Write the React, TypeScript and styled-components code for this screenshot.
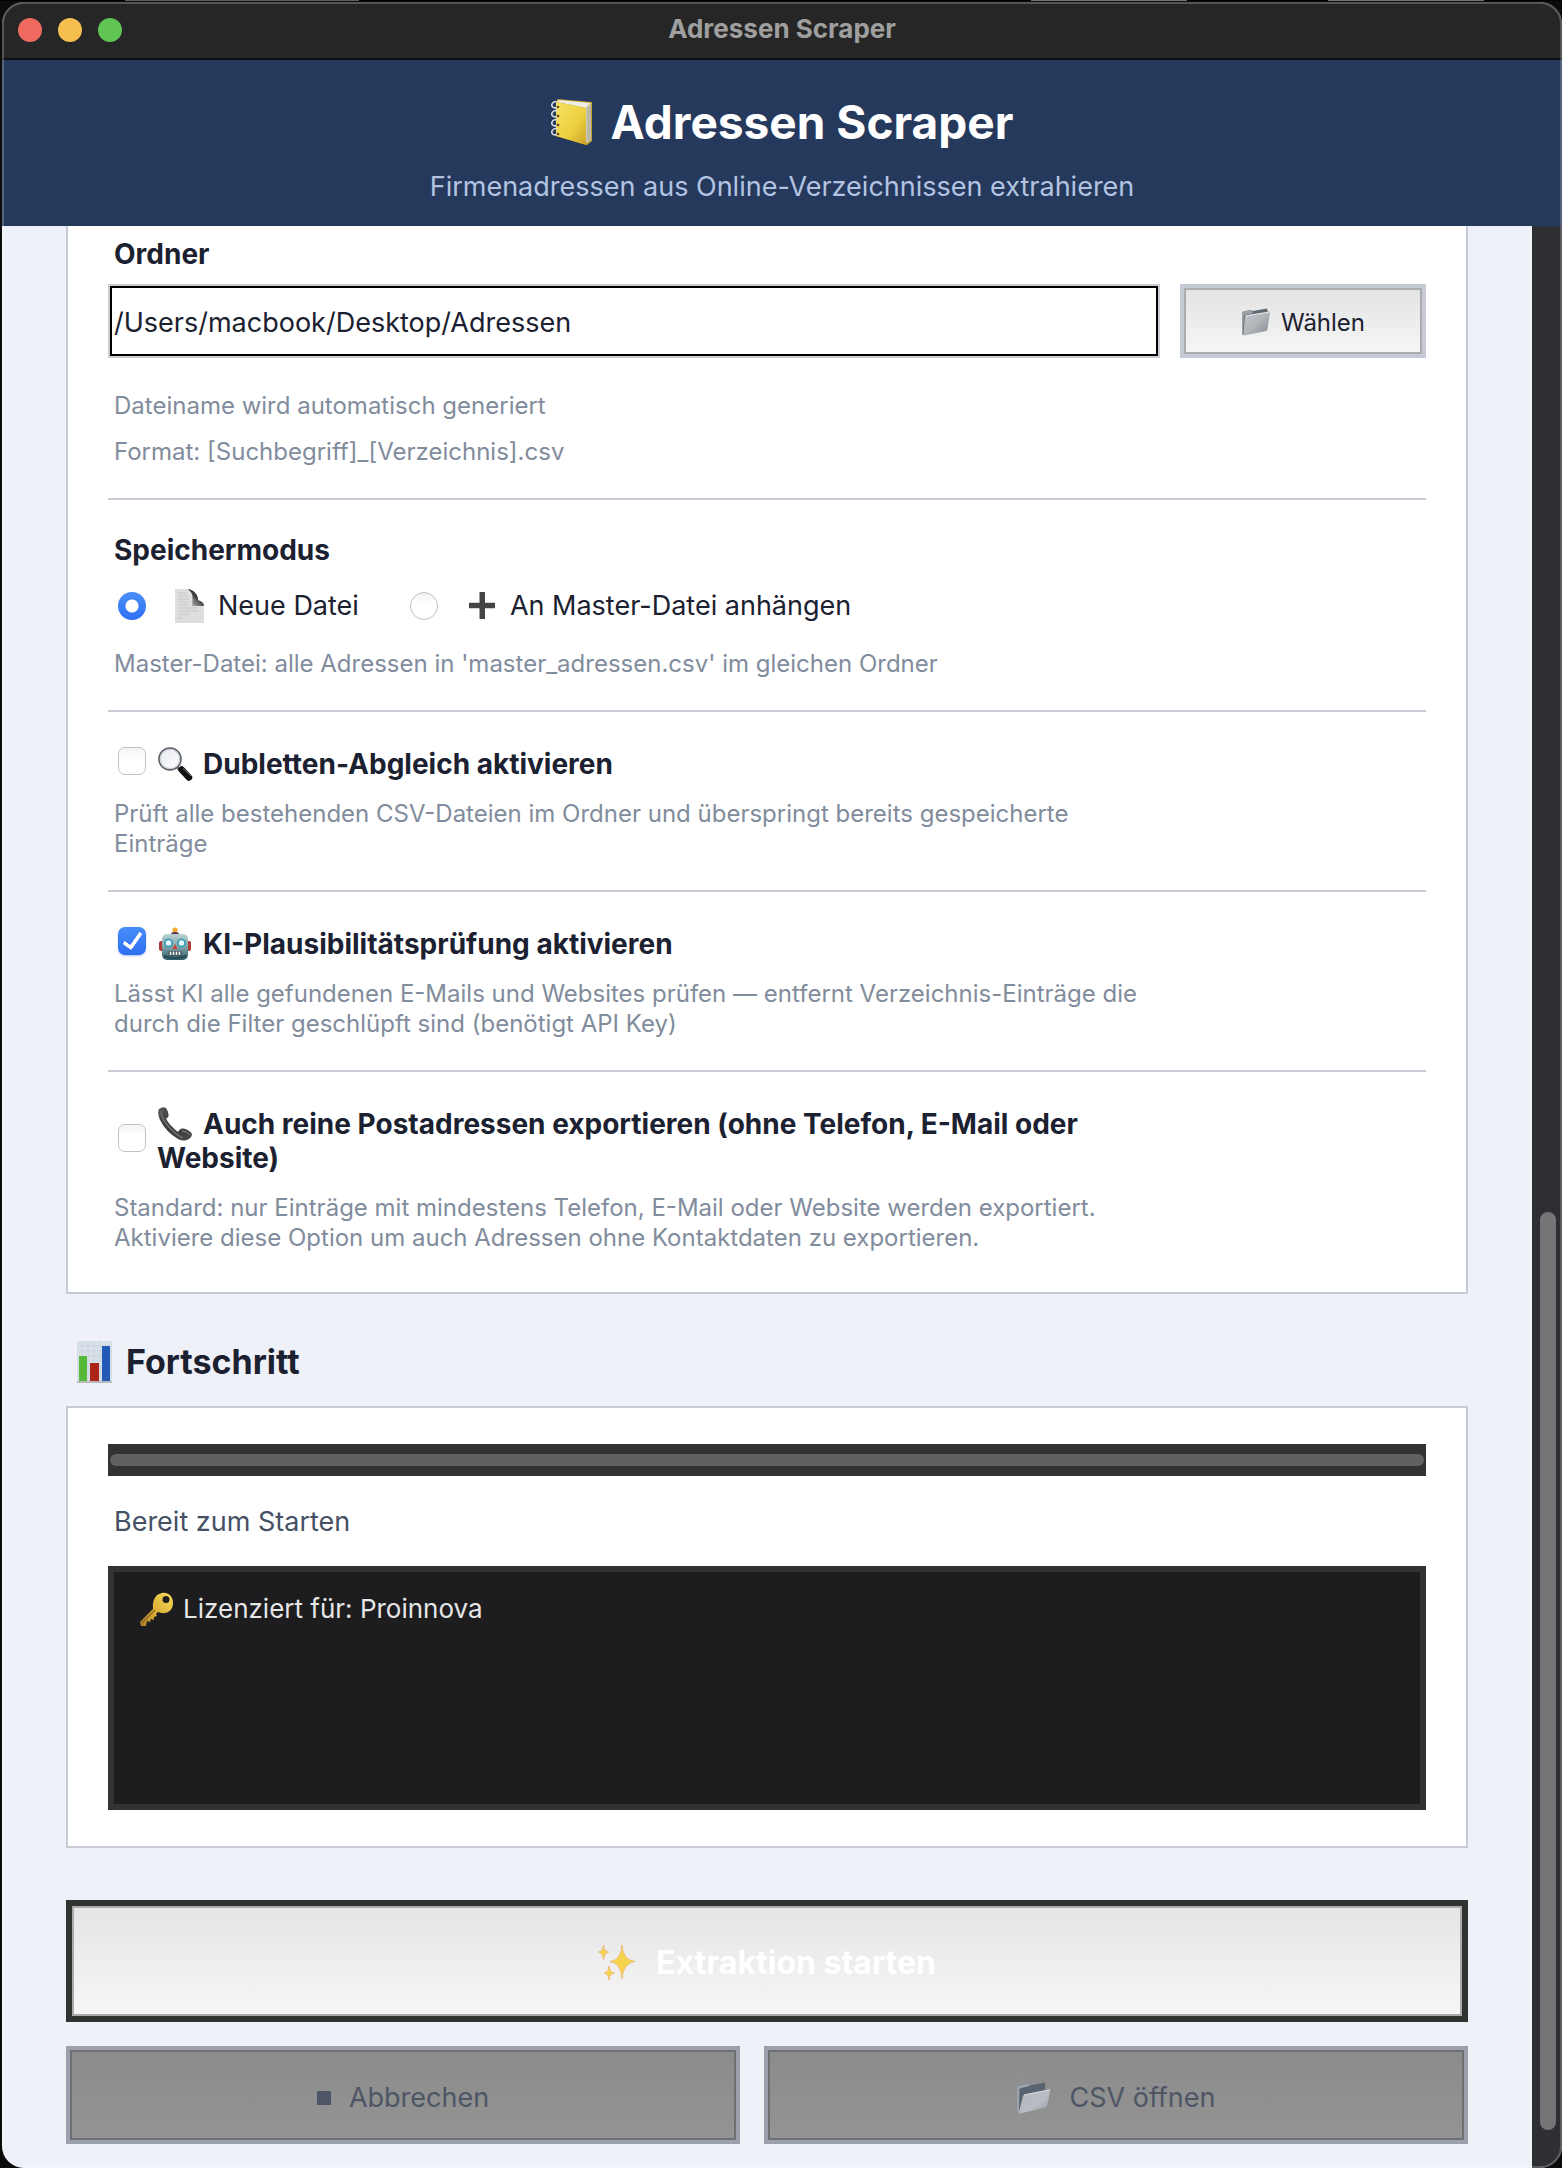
import React, { useState } from "react";
import styled, { createGlobalStyle, css } from "styled-components";

const GlobalStyle = createGlobalStyle`
  *, *::before, *::after { box-sizing: border-box; }
  body {
    margin: 0;
    background: #0c0c0c;
    font-family: Inter, "Liberation Sans", sans-serif;
    color: #1b2130;
  }
  h1, h2, h3, p { margin: 0; }
  button, input { font-family: inherit; }
`;

const Desktop = styled.div`
  min-height: 100vh;
  padding: 2px 0 0 2px;
  background: linear-gradient(
      90deg,
      #000 8%, #59625f 8% 23%, #000 23% 66%,
      #6c7875 66% 76%, #000 76% 85%, #6c7875 85% 95%, #000 95%
    ) top / 100% 1px no-repeat, #0c0c0c;
`;

const Window = styled.main`
  position: relative;
  display: flex;
  flex-direction: column;
  min-height: calc(100vh - 2px);
  border-radius: 22px;
  overflow: hidden;
  background: #eef1f7;

  &::after {
    content: "";
    position: absolute;
    inset: 0;
    border: 2px solid rgba(255, 255, 255, 0.22);
    border-radius: 22px;
    pointer-events: none;
  }
`;

const TitleBar = styled.div`
  display: grid;
  grid-template-columns: 1fr auto 1fr;
  align-items: center;
  height: 58px;
  padding: 0 16px;
  background: #262626;
  border-bottom: 2px solid #0b0d10;
`;

const Lights = styled.div`
  display: flex;
  gap: 16px;
`;

const Light = styled.span<{ $color: string }>`
  width: 24px;
  height: 24px;
  border-radius: 50%;
  background: ${(p) => p.$color};
`;

const WindowTitle = styled.span`
  padding-bottom: 2px;
  font-size: 26px;
  line-height: 32px;
  font-weight: 700;
  color: #9f9f9f;
`;

const Header = styled.header`
  display: flex;
  flex-direction: column;
  align-items: center;
  gap: 18px;
  padding: 32px 24px 22px;
  background: #25395c;
`;

const AppTitle = styled.h1`
  display: flex;
  align-items: center;
  gap: 18px;
  font-size: 46px;
  line-height: 60px;
  font-weight: 700;
  color: #fff;
`;

const Subtitle = styled.p`
  font-size: 27px;
  line-height: 34px;
  color: #b3c4e2;
`;

const Body = styled.div`
  display: flex;
  flex: 1;
`;

const Content = styled.div`
  flex: 1;
  min-width: 0;
  padding: 0 64px 24px;
`;

const Track = styled.div`
  display: flex;
  flex-direction: column;
  width: 30px;
  padding: 0 6px 0 8px;
  background: #2e2f32;
`;

const Thumb = styled.div`
  flex: 918;
  border-radius: 8px;
  background: #757577;
`;

const TrackSpace = styled.div<{ $share: number }>`
  flex: ${(p) => p.$share};
`;

const Card = styled.section<{ $cut?: boolean }>`
  padding: 36px 40px;
  background: #fff;
  border: 2px solid #c6cbd5;
  ${(p) =>
    p.$cut &&
    css`
      padding: 0 40px 8px;
      border-top: 0;
    `}
`;

const Group = styled.div<{ $top: number }>`
  padding: ${(p) => p.$top}px 0 31px;
  & + & {
    border-top: 2px solid #c6cbd5;
  }
`;

const FieldTitle = styled.h3`
  padding-left: 6px;
  font-size: 28px;
  line-height: 34px;
  font-weight: 700;
`;

const FieldLabel = styled.label`
  display: block;
  padding-left: 6px;
  font-size: 28px;
  line-height: 34px;
  font-weight: 700;
`;

const PathRow = styled.div`
  display: flex;
  gap: 20px;
  margin: 13px 0 33px;
`;

const PathInput = styled.input`
  flex: 1;
  min-width: 0;
  height: 74px;
  padding: 2px 4px 0;
  border: 2px solid #c9ccd2;
  border-radius: 0;
  outline: 0;
  background: #fff;
  box-shadow: inset 0 0 0 2px #000;
  font-size: 27px;
  color: #1b2130;
`;

const buttonKinds = {
  plain: css`
    width: 246px;
    height: 74px;
    padding-top: 2px;
    gap: 10px;
    border: 4px solid #c5cad5;
    box-shadow: inset 0 0 0 2px #aaacaf;
    background: linear-gradient(#e2e2e2, #f7f7f7);
    font-size: 24px;
    color: #1b2130;
  `,
  primary: css`
    width: 100%;
    height: 122px;
    padding-top: 2px;
    gap: 20px;
    border: 6px solid #313232;
    box-shadow: inset 0 0 0 2px #aaaaaa;
    background: linear-gradient(#e4e4e4, #f7f7f7);
    font-size: 32px;
    font-weight: 700;
    color: #fff;
  `,
  disabled: css`
    height: 98px;
    padding-top: 5px;
    gap: 18px;
    border: 4px solid #9ca0ac;
    box-shadow: inset 0 0 0 2px #6d6f75;
    background: linear-gradient(#8b8b8b, #949494);
    font-size: 27px;
    color: #4e5565;
  `,
};

const Button = styled.button<{ $kind: keyof typeof buttonKinds }>`
  display: flex;
  align-items: center;
  justify-content: center;
  padding: 0;
  border-radius: 0;
  ${(p) => buttonKinds[p.$kind]}
  background-origin: border-box;
`;

const Hint = styled.p<{ $gap?: number }>`
  max-width: 1046px;
  margin-top: ${(p) => p.$gap ?? 0}px;
  padding-left: 6px;
  font-size: 24px;
  line-height: 30px;
  color: #818c9c;
`;

const RadioRow = styled.div`
  display: flex;
  gap: 51px;
  margin-top: 22px;
  padding-left: 10px;
`;

const RadioLabel = styled.label`
  display: flex;
  align-items: center;
  font-size: 27px;
  line-height: 34px;

  svg {
    margin: 0 8px 0 28px;
  }
`;

const Radio = styled.input`
  appearance: none;
  width: 28px;
  height: 28px;
  margin: 0;
  border: 1px solid #c2c2c2;
  border-radius: 50%;
  background: linear-gradient(#f2f2f2, #fff 40%);

  &:checked {
    border: 0;
    background: radial-gradient(circle, #fff 6px, transparent 7px),
      linear-gradient(#4a90f8, #2f6ff0);
  }
`;

const CheckRow = styled.div`
  display: flex;
  align-items: center;
  gap: 11px;
  padding-left: 10px;
`;

const CheckLabel = styled.label`
  max-width: 1000px;
  font-size: 28px;
  line-height: 34px;
  font-weight: 700;

  svg {
    margin-right: 10px;
    vertical-align: -7px;
  }
`;

const Checkbox = styled.input`
  appearance: none;
  flex: none;
  display: grid;
  place-items: center;
  width: 28px;
  height: 28px;
  margin: 0 0 6px;
  border: 1px solid #c2c2c2;
  border-radius: 7px;
  background: linear-gradient(#f4f4f4, #fff 40%);

  &:checked {
    border: 0;
    background: linear-gradient(#478df8, #2e70f2);
    box-shadow: 0 1px 2px rgba(47, 111, 240, 0.4);
  }
  &:checked::after {
    content: "";
    width: 11px;
    height: 20px;
    margin-bottom: 4px;
    border: solid #fff;
    border-width: 0 4px 4px 0;
    border-radius: 2px;
    transform: rotate(35deg);
  }
`;

const SectionTitle = styled.h2`
  display: flex;
  align-items: center;
  gap: 14px;
  margin: 47px 0 23px;
  padding-left: 11px;
  font-size: 34px;
  line-height: 42px;
  font-weight: 700;
`;

const ProgressFrame = styled.div`
  display: flex;
  padding: 10px 2px;
  background: #323232;
`;

const Progress = styled.progress`
  appearance: none;
  width: 100%;
  height: 12px;
  border: 0;

  &::-webkit-progress-bar {
    border-radius: 6px;
    background: #616161;
  }
  &::-webkit-progress-value {
    border-radius: 6px;
    background: #3d7ff5;
  }
`;

const Status = styled.p`
  margin: 29px 0 27px;
  padding-left: 6px;
  font-size: 27px;
  line-height: 34px;
  color: #455065;
`;

const Log = styled.div`
  min-height: 244px;
  padding: 20px 25px;
  border: 6px solid #323232;
  background: #1d1d1f;
`;

const LogLine = styled.p`
  display: flex;
  align-items: center;
  gap: 9px;
  font-size: 26px;
  line-height: 34px;
  color: #e6e6e6;
`;

const Actions = styled.div`
  display: grid;
  grid-template-columns: 674fr 704fr;
  gap: 24px;
  margin-top: 52px;
`;

const FullRow = styled.div`
  grid-column: 1 / -1;
`;

const StopSquare = styled.span`
  width: 14px;
  height: 14px;
  background: currentColor;
`;

const NotebookIcon = () => (
  <svg width="42" height="48" viewBox="0 0 42 48" aria-hidden="true">
    <defs>
      <linearGradient id="nb" x1="0" y1="0" x2="1" y2="1">
        <stop offset="0" stopColor="#f7e163" />
        <stop offset="0.6" stopColor="#ecd03f" />
        <stop offset="1" stopColor="#c9a227" />
      </linearGradient>
    </defs>
    <path d="M6 1 L41 4 L41 43 L36 47 L5 38 Z" fill="#c6a32f" />
    <path d="M8 2 L40 5 L35 10 L6 4 Z" fill="#efeee6" />
    <path d="M35 10 L40 6 L40 42 L35 45 Z" fill="#cfccba" />
    <path d="M37 9 V43 M39 8 V42" stroke="#969381" strokeWidth="0.7" />
    <path d="M5 4 L35 10 L35 47 L5 38 Z" fill="url(#nb)" />
    <g fill="none" stroke="#d9dce0" strokeWidth="1.6">
      <path d="M7 9 C3 11 0 9 1 6 C2 4 4 3 6 4" />
      <path d="M7 18 C3 20 0 18 1 15 C2 13 4 12 6 13" />
      <path d="M7 27 C3 29 0 27 1 24 C2 22 4 21 6 22" />
      <path d="M7 36 C3 38 0 36 1 33 C2 31 4 30 6 31" />
    </g>
    <g fill="#5c4a14">
      <circle cx="7" cy="9" r="1.3" /><circle cx="7" cy="18" r="1.3" />
      <circle cx="7" cy="27" r="1.3" /><circle cx="7" cy="36" r="1.3" />
    </g>
  </svg>
);

const FolderIcon = () => (
  <svg width="30" height="28" viewBox="0 0 30 28" aria-hidden="true">
    <defs>
      <linearGradient id="fo" x1="0" y1="0" x2="1" y2="1">
        <stop offset="0" stopColor="#c3c7cb" />
        <stop offset="0.5" stopColor="#b1b5ba" />
        <stop offset="1" stopColor="#84898f" />
      </linearGradient>
    </defs>
    <path d="M1 4 L9 2 L12 3 L26 0.5 L27 5 L4 26 L1 27 Z" fill="#5f676f" />
    <path d="M1 4 L9 2 L12 4 L12 5 L3 7 L2 27 L1 26 Z" fill="#9ba3aa" />
    <path d="M4 8 Q4 7 5.500 7 L28 3.500 Q29.500 3.500 29 5 L26.500 21 Q26.300 22.500 25 23 L3.500 27.500 Q2.300 27.500 2.500 26 Z" fill="url(#fo)" />
    <path d="M4.500 8 L28.500 4.200" stroke="#dfe3e6" strokeWidth="1" />
  </svg>
);

const OpenFolderIcon = () => (
  <svg width="35" height="32" viewBox="0 0 35 32" aria-hidden="true">
    <defs>
      <linearGradient id="of" x1="0" y1="0" x2="1" y2="1">
        <stop offset="0" stopColor="#b5b9bf" />
        <stop offset="0.6" stopColor="#b9bdc3" />
        <stop offset="1" stopColor="#92979e" />
      </linearGradient>
    </defs>
    <path d="M1 4 L13 1.500 L14 3.500 L29 0.500 L29 9 L3 31 L1 29 Z" fill="#59636f" />
    <path d="M1 4 L13 1.500 L14 4 L3.500 6.500 L3 31 L1 29 Z" fill="#9aa3ad" />
    <path d="M7 14 Q7.500 12.500 9 12.200 L33 7.500 Q34.600 7.300 34 9 L31 24 Q30.700 25.300 29.500 25.600 L4 31.500 Q2.500 31.700 3 30 Z" fill="url(#of)" />
    <path d="M8 13 L34 7.800" stroke="#d3d7dc" strokeWidth="1" />
  </svg>
);

const PageIcon = () => (
  <svg width="36" height="34" viewBox="0 0 36 34" aria-hidden="true">
    <defs>
      <linearGradient id="pg" x1="0" y1="1" x2="1" y2="0">
        <stop offset="0" stopColor="#d8d8d8" />
        <stop offset="0.45" stopColor="#5a5a5a" />
        <stop offset="1" stopColor="#222" />
      </linearGradient>
    </defs>
    <path d="M1 0 H15 L30 16 V34 H1 Z" fill="#dedede" />
    <path d="M14 0 C19 3 19 8 18 17 L30 17 C30 12 25 12 24 11 C24 6 20 1 14 0 Z" fill="url(#pg)" />
    <path d="M14 0 C19 1 24 5 24 11 C20 9 19 4 14 0 Z" fill="#3c3c3c" />
    <path d="M4 4 h8 M4 7 h10 M4 10 h11 M4 13 h11 M4 16 h10 M4 19 h19 M4 22 h21 M4 25 h12 M4 29 h5" stroke="#c3c3c3" strokeWidth="0.9" />
  </svg>
);

const PlusIcon = () => (
  <svg width="36" height="34" viewBox="0 0 36 34" aria-hidden="true">
    <path d="M13.500 3 h5.500 v10.700 h10 v5.600 h-10 V30 h-5.500 V19.300 H3 v-5.600 h10.500 Z" fill="#444" />
  </svg>
);

const MagnifierIcon = () => (
  <svg width="36" height="34" viewBox="0 0 36 34" aria-hidden="true">
    <defs>
      <linearGradient id="mg" x1="0" y1="0" x2="1" y2="1">
        <stop offset="0" stopColor="#e6e9ee" />
        <stop offset="1" stopColor="#fff" />
      </linearGradient>
    </defs>
    <path d="M20 20 L24 24" stroke="#777" strokeWidth="3" />
    <path d="M24.500 22.500 L32 30.500" stroke="#111" strokeWidth="6.500" strokeLinecap="round" />
    <path d="M26 21.500 L34 29" stroke="#6f6f6f" strokeWidth="1" />
    <circle cx="13" cy="12" r="11" fill="url(#mg)" stroke="#5b5f66" strokeWidth="1.600" />
    <circle cx="13" cy="12" r="9.600" fill="none" stroke="#c9cdd3" strokeWidth="1" />
  </svg>
);

const RobotIcon = () => (
  <svg width="36" height="34" viewBox="0 0 36 34" aria-hidden="true">
    <defs>
      <linearGradient id="rb" x1="0" y1="0" x2="0" y2="1">
        <stop offset="0" stopColor="#b9d2d4" />
        <stop offset="0.5" stopColor="#7fa3a8" />
        <stop offset="1" stopColor="#2d5c66" />
      </linearGradient>
    </defs>
    <circle cx="18" cy="3" r="2.600" fill="#f0a92e" />
    <path d="M14 7 Q14 5 18 5 Q22 5 22 7 Z" fill="#55314e" />
    <rect x="2" y="14" width="5" height="10" rx="2" fill="#b23a35" />
    <rect x="29" y="14" width="5" height="10" rx="2" fill="#b23a35" />
    <rect x="5" y="7" width="26" height="26" rx="5" fill="url(#rb)" />
    <path d="M7 29 Q18 33 29 29" fill="none" stroke="#244c55" strokeWidth="2" />
    <g fill="#eafcff" stroke="#3a9db5" strokeWidth="1.800">
      <circle cx="11.500" cy="16" r="3.600" /><circle cx="24.500" cy="16" r="3.600" />
    </g>
    <path d="M18 17 L20.500 22 H15.500 Z" fill="#c8403a" />
    <rect x="11.500" y="24" width="13" height="4.500" rx="1" fill="#2c3d42" />
    <path d="M13.500 24.500 v3.500 M16.500 24.500 v3.500 M19.500 24.500 v3.500 M22.500 24.500 v3.500" stroke="#f3f3f3" strokeWidth="1.800" />
  </svg>
);

const PhoneIcon = () => (
  <svg width="36" height="34" viewBox="0 0 36 34" aria-hidden="true">
    <defs>
      <linearGradient id="ph" x1="0" y1="0" x2="1" y2="1">
        <stop offset="0" stopColor="#565656" />
        <stop offset="0.5" stopColor="#3a3a3a" />
        <stop offset="1" stopColor="#4a4a4a" />
      </linearGradient>
    </defs>
    <path d="M2 2 Q6 -1 9 1 Q12 5 11.500 9 Q11 11 9 11.500 Q12 18 21 25 Q23 21 26 21.500 Q31 22 34.500 26 Q36 29 32 32 Q27 35 21 32 Q9 25 3 13 Q0 6 2 2 Z" fill="url(#ph)" />
    <path d="M4 4 Q4 11 12 20 Q19 28 26 31" fill="none" stroke="#777" strokeWidth="1.200" />
    <path d="M25 24 Q30 24 33 28" fill="none" stroke="#858585" strokeWidth="1" />
  </svg>
);

const ChartIcon = () => (
  <svg width="35" height="42" viewBox="0 0 35 42" aria-hidden="true">
    <rect width="35" height="42" fill="#d9e1e8" />
    <path d="M0 5 H35 M0 10 H35 M0 15 H35 M0 20 H35 M0 25 H35 M0 30 H35 M0 35 H35 M5 0 V42 M11 0 V42 M17 0 V42 M23 0 V42 M29 0 V42" stroke="#c5d2dd" strokeWidth="0.700" />
    <rect x="2" y="15" width="8" height="26" fill="#56b83b" />
    <rect x="13" y="22" width="9" height="19" fill="#ad2418" />
    <rect x="25" y="5" width="8" height="36" fill="#2559b8" />
    <rect y="40" width="35" height="2" fill="#b7b9bd" />
  </svg>
);

const KeyIcon = () => (
  <svg width="35" height="34" viewBox="0 0 35 34" aria-hidden="true">
    <defs>
      <linearGradient id="ky" x1="1" y1="0" x2="0" y2="1">
        <stop offset="0" stopColor="#f6dc55" />
        <stop offset="0.6" stopColor="#d9ab35" />
        <stop offset="1" stopColor="#a97b25" />
      </linearGradient>
    </defs>
    <path
      fillRule="evenodd"
      d="M23 1 C29 0 34 4 34 11 C34 18 29 22 22 21 L19 20 L17 22 L18 24 L15 25 L15 28 L12 27 L11 30 L8 29 L7 34 L2 34 L1 30 L14 17 C13 9 16 2 23 1 Z M27 4 A3.500 3.500 0 1 0 27 11 A3.500 3.500 0 1 0 27 4 Z"
      fill="url(#ky)"
    />
    <path d="M3 31 L16 18" stroke="#8a631c" strokeWidth="1.200" />
  </svg>
);

const SparklesIcon = () => (
  <svg width="38" height="36" viewBox="0 0 38 36" aria-hidden="true">
    <g fill="#f6d34f" stroke="#eeb56a" strokeWidth="0.800">
      <path d="M24 1 Q25 16 37 17.500 Q25 19 24 35 Q23 19 12 17.500 Q23 16 24 1 Z" />
      <path d="M5.500 1 Q6 7.500 10.500 8 Q6 9 5.500 16 Q5 9 0.500 8 Q5 7.500 5.500 1 Z" />
      <path d="M11 22 Q11.500 28.500 16.500 29 Q11.500 29.500 11 36 Q10.500 29.500 6 29 Q10.500 28.500 11 22 Z" />
    </g>
  </svg>
);

type OptionProps = {
  id: string;
  icon: React.ReactNode;
  label: string;
  hint: string;
  initial?: boolean;
};

function CheckOption({ id, icon, label, hint, initial = false }: OptionProps) {
  const [on, setOn] = useState(initial);
  return (
    <Group $top={35}>
      <CheckRow>
        <Checkbox id={id} type="checkbox" checked={on} onChange={(e) => setOn(e.target.checked)} />
        <CheckLabel htmlFor={id}>
          {icon}
          {label}
        </CheckLabel>
      </CheckRow>
      <Hint $gap={18}>{hint}</Hint>
    </Group>
  );
}

export default function App() {
  const [path, setPath] = useState("/Users/macbook/Desktop/Adressen");
  const [mode, setMode] = useState("new");

  return (
    <>
      <GlobalStyle />
      <Desktop>
        <Window>
          <TitleBar>
            <Lights>
              <Light $color="#ee6a5f" />
              <Light $color="#f5be4f" />
              <Light $color="#61c554" />
            </Lights>
            <WindowTitle>Adressen Scraper</WindowTitle>
          </TitleBar>

          <Header>
            <AppTitle>
              <NotebookIcon />
              Adressen Scraper
            </AppTitle>
            <Subtitle>Firmenadressen aus Online-Verzeichnissen extrahieren</Subtitle>
          </Header>

          <Body>
            <Content>
              <Card $cut>
                <Group $top={11}>
                  <FieldLabel htmlFor="path">Ordner</FieldLabel>
                  <PathRow>
                    <PathInput id="path" type="text" value={path} onChange={(e) => setPath(e.target.value)} />
                    <Button type="button" $kind="plain">
                      <FolderIcon />
                      Wählen
                    </Button>
                  </PathRow>
                  <Hint>Dateiname wird automatisch generiert</Hint>
                  <Hint $gap={16}>Format: [Suchbegriff]_[Verzeichnis].csv</Hint>
                </Group>

                <Group $top={33}>
                  <FieldTitle>Speichermodus</FieldTitle>
                  <RadioRow>
                    <RadioLabel>
                      <Radio type="radio" name="mode" checked={mode === "new"} onChange={() => setMode("new")} />
                      <PageIcon />
                      Neue Datei
                    </RadioLabel>
                    <RadioLabel>
                      <Radio type="radio" name="mode" checked={mode === "append"} onChange={() => setMode("append")} />
                      <PlusIcon />
                      An Master-Datei anhängen
                    </RadioLabel>
                  </RadioRow>
                  <Hint $gap={26}>Master-Datei: alle Adressen in 'master_adressen.csv' im gleichen Ordner</Hint>
                </Group>

                <CheckOption
                  id="dedupe"
                  icon={<MagnifierIcon />}
                  label="Dubletten-Abgleich aktivieren"
                  hint="Prüft alle bestehenden CSV-Dateien im Ordner und überspringt bereits gespeicherte Einträge"
                />
                <CheckOption
                  id="ai-check"
                  icon={<RobotIcon />}
                  label="KI-Plausibilitätsprüfung aktivieren"
                  hint="Lässt KI alle gefundenen E-Mails und Websites prüfen — entfernt Verzeichnis-Einträge die durch die Filter geschlüpft sind (benötigt API Key)"
                  initial
                />
                <CheckOption
                  id="postal"
                  icon={<PhoneIcon />}
                  label="Auch reine Postadressen exportieren (ohne Telefon, E-Mail oder Website)"
                  hint="Standard: nur Einträge mit mindestens Telefon, E-Mail oder Website werden exportiert. Aktiviere diese Option um auch Adressen ohne Kontaktdaten zu exportieren."
                />
              </Card>

              <SectionTitle>
                <ChartIcon />
                Fortschritt
              </SectionTitle>

              <Card>
                <ProgressFrame>
                  <Progress value={0} max={100} aria-label="Fortschritt" />
                </ProgressFrame>
                <Status>Bereit zum Starten</Status>
                <Log role="log">
                  <LogLine>
                    <KeyIcon />
                    Lizenziert für: Proinnova
                  </LogLine>
                </Log>
              </Card>

              <Actions>
                <FullRow>
                  <Button type="button" $kind="primary">
                    <SparklesIcon />
                    Extraktion starten
                  </Button>
                </FullRow>
                <Button type="button" $kind="disabled" disabled>
                  <StopSquare />
                  Abbrechen
                </Button>
                <Button type="button" $kind="disabled" disabled>
                  <OpenFolderIcon />
                  CSV öffnen
                </Button>
              </Actions>
            </Content>

            <Track>
              <TrackSpace $share={986} />
              <Thumb />
              <TrackSpace $share={38} />
            </Track>
          </Body>
        </Window>
      </Desktop>
    </>
  );
}
